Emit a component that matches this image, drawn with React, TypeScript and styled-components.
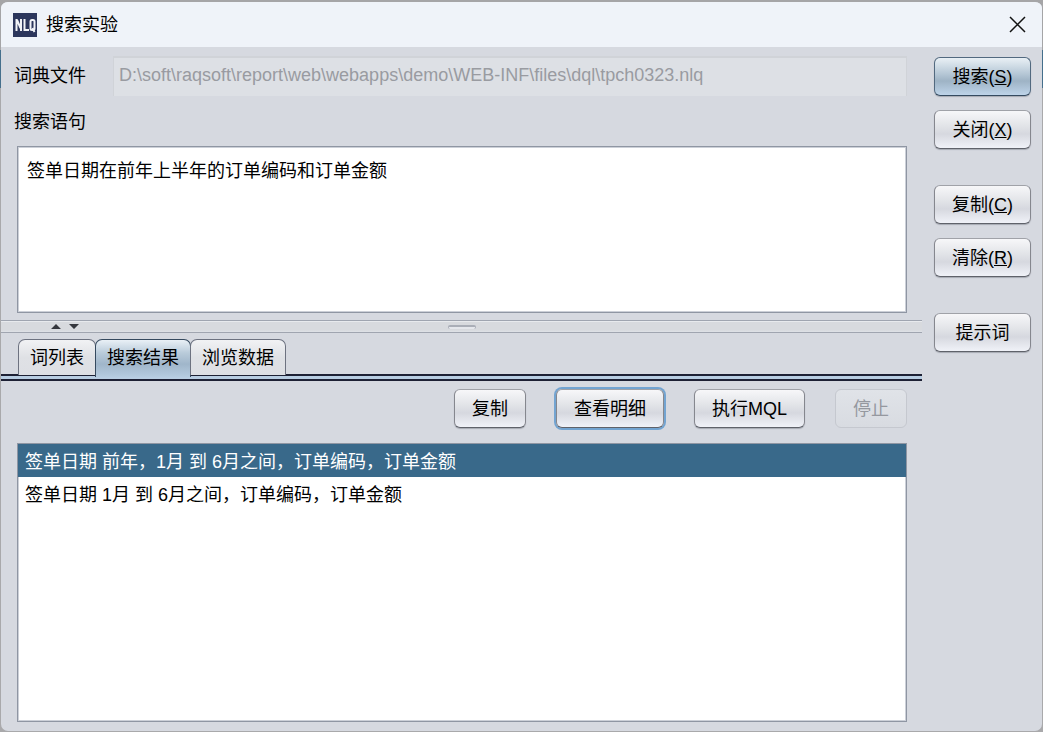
import React, { useState } from "react";
import styled, { createGlobalStyle, css } from "styled-components";

const GlobalStyle = createGlobalStyle`
  * { box-sizing: border-box; }
  body {
    margin: 0;
    background: linear-gradient(#a5a5a7 50px, #456f8c 50px 88px, #a9a9ab 88px);
    font: 18px/24px "Liberation Sans", "Noto Sans CJK SC", sans-serif;
    color: #000;
  }
  button, input, textarea { font: inherit; color: inherit; }
`;

const Window = styled.div`
  display: flex;
  flex-direction: column;
  min-height: 100vh;
  border: solid transparent;
  border-width: 2px 1px 1px;
  border-radius: 8px;
  background: #d6d9e0 padding-box;
  overflow: hidden;
`;

const TitleBar = styled.header`
  display: flex;
  align-items: center;
  gap: 9px;
  height: 45px;
  padding: 0 16px 0 12px;
  background: #eff3f9;
`;

const Title = styled.h1`
  flex: 1;
  margin: 0;
  font-size: 18px;
  font-weight: 400;
`;

const CloseButton = styled.button`
  display: flex;
  padding: 0;
  border: 0;
  background: none;
`;

const Body = styled.div`
  flex: 1;
  display: flex;
  gap: 12px;
  padding-right: 11px;
`;

const Main = styled.main`
  flex: 1;
  min-width: 0;
  display: flex;
  flex-direction: column;
  padding: 9px 0;
`;

const FileRow = styled.div`
  display: grid;
  grid-template-columns: 99px 1fr;
  align-items: center;
  padding: 0 15px 0 13px;
`;

const PathInput = styled.input`
  width: 100%;
  height: 40px;
  padding: 0 5px 3px;
  border: solid #d0d3d8;
  border-width: 2px 1px 0;
  border-radius: 0;
  background: #dde0e5;
  &:disabled { color: #999ba1; }
`;

const QueryLabel = styled.label`
  margin: 14px 15px 12px 13px;
`;

const Query = styled.textarea`
  display: block;
  height: 167px;
  margin: 0 15px 0 16px;
  padding: 12px 9px;
  border: 1px solid #8f96a3;
  box-shadow: inset 0 0 0 1px #ccd0d8;
  background: #fff;
  resize: none;
  outline: 0;
`;

const Divider = styled.div`
  display: grid;
  grid-template-columns: 1fr 28px 1fr;
  align-items: center;
  height: 13px;
  margin-top: 7px;
  border: solid #a0a5b0;
  border-width: 1px 0;
  background: linear-gradient(#e8eaed 1px, #d8dade 1px 9px, #dfe2e7);
`;

const Arrows = styled.svg`
  display: block;
  width: 30px;
  height: 10px;
  margin-left: 50px;
`;

const Grip = styled.span`
  height: 4px;
  border: solid #aaaeb7;
  border-width: 2px 1px 0;
  border-radius: 2px;
  background: #e5e7ec;
`;

const Tabs = styled.div`
  display: flex;
  height: 42px;
  margin-top: 6px;
  padding-left: 17px;
  background: linear-gradient(#d6d9e0 35px, #1d2034 35px 37px, #b8cde2 37px 40px, #1d2034 40px);
`;

const Tab = styled.button<{ $active: boolean }>`
  height: ${(p) => (p.$active ? 38 : 36)}px;
  padding: ${(p) => (p.$active ? "0 11px 2px" : "0 11px")};
  border: 1px solid #6d7280;
  border-bottom: 0;
  border-radius: 7px 7px 0 0;
  background: linear-gradient(#f1f2f4, #dfe1e5 50%, #dddfe4);
  & + & { margin-left: -1px; }
  ${(p) =>
    p.$active &&
    css`
      border-color: #35495e;
      background: linear-gradient(#e9f0f6, #b9cbda 35%, #a0b6ca 65%, #b5cbe0);
    `}
`;

const Button = styled.button<{ $look?: "primary" | "focused" }>`
  height: 39px;
  padding: 0 17px;
  border: 1px solid #85878e;
  border-top-color: #a0a2a8;
  border-bottom-color: #5f626a;
  border-radius: 6px;
  background: linear-gradient(#f7f7f9, #e2e4e8 40%, #d6d8df 62%, #f0f2f8);
  box-shadow: 0 1px 1px #a6a9b2;
  white-space: nowrap;
  &:disabled {
    color: #95989f;
    border-color: #c5c8cf;
    background: linear-gradient(#e0e3e8, #d8dbe1);
    box-shadow: none;
  }
  ${(p) =>
    p.$look === "primary" &&
    css`
      border-color: #52697f;
      border-bottom-color: #354b60;
      background: linear-gradient(#e9f0f5, #b9cad8 40%, #9eb3c5 62%, #bed4e9);
    `}
  ${(p) =>
    p.$look === "focused" &&
    css`
      box-shadow: 0 0 0 2px #73a4d1;
    `}
`;

const Actions = styled.div`
  display: flex;
  justify-content: flex-end;
  gap: 30px;
  padding: 8px 15px 15px;
`;

const Results = styled.ul`
  flex: 1;
  margin: 0 15px 0 16px;
  padding: 0;
  border: 1px solid #8f96a3;
  box-shadow: inset 0 0 0 1px #ccd0d8;
  background: #fff;
  list-style: none;
`;

const Result = styled.li<{ $selected: boolean }>`
  height: 33px;
  padding: 6px 7px 3px;
  color: ${(p) => (p.$selected ? "#fff" : "#000")};
  background: ${(p) => (p.$selected ? "#39698a" : "transparent")};
`;

const Side = styled.aside`
  display: flex;
  flex-direction: column;
  gap: 36px;
  width: 97px;
  padding-top: 10px;
`;

const ButtonGroup = styled.div`
  display: grid;
  gap: 14px;
  ${Button} { padding: 0; }
`;

const tabs = ["词列表", "搜索结果", "浏览数据"];
const results = [
  "签单日期 前年，1月 到 6月之间，订单编码，订单金额",
  "签单日期 1月 到 6月之间，订单编码，订单金额",
];

function Logo() {
  return (
    <svg width="24" height="24" viewBox="0 0 24 24" aria-label="NLQ">
      <rect width="24" height="24" fill="#2c365c" />
      <g fill="none" stroke="#f2f3f7" strokeWidth="2">
        <path d="M3.500 18V6M4 7l3.500 8M8 18V6M11.500 6v11h4.500" />
        <rect x="17.500" y="7" width="4" height="10" rx="1.500" />
        <path d="M19.500 15l2 4" />
      </g>
    </svg>
  );
}

export default function App() {
  const [tab, setTab] = useState(1);
  const [selected, setSelected] = useState(0);
  return (
    <>
      <GlobalStyle />
      <Window>
        <TitleBar>
          <Logo />
          <Title>搜索实验</Title>
          <CloseButton aria-label="关闭窗口">
            <svg width="17" height="17" viewBox="0 0 17 17" fill="none" stroke="#111" strokeWidth="1.500">
              <path d="M1 1l15 15M16 1L1 16" />
            </svg>
          </CloseButton>
        </TitleBar>
        <Body>
          <Main>
            <FileRow>
              <label htmlFor="dict">词典文件</label>
              <PathInput
                id="dict"
                disabled
                defaultValue={"D:\\soft\\raqsoft\\report\\web\\webapps\\demo\\WEB-INF\\files\\dql\\tpch0323.nlq"}
              />
            </FileRow>
            <QueryLabel htmlFor="query">搜索语句</QueryLabel>
            <Query id="query" spellCheck={false} defaultValue="签单日期在前年上半年的订单编码和订单金额" />
            <Divider role="separator">
              <Arrows viewBox="0 0 30 10" fill="#35373d">
                <path d="M0 7L5 2l5 5zM18 2h10l-5 5z" />
              </Arrows>
              <Grip />
            </Divider>
            <Tabs role="tablist">
              {tabs.map((name, i) => (
                <Tab key={name} role="tab" aria-selected={tab === i} $active={tab === i} onClick={() => setTab(i)}>
                  {name}
                </Tab>
              ))}
            </Tabs>
            <Actions>
              <Button>复制</Button>
              <Button $look="focused">查看明细</Button>
              <Button>执行MQL</Button>
              <Button disabled>停止</Button>
            </Actions>
            <Results>
              {results.map((text, i) => (
                <Result key={text} $selected={selected === i} onClick={() => setSelected(i)}>
                  {text}
                </Result>
              ))}
            </Results>
          </Main>
          <Side>
            <ButtonGroup>
              <Button $look="primary">搜索(<u>S</u>)</Button>
              <Button>关闭(<u>X</u>)</Button>
            </ButtonGroup>
            <ButtonGroup>
              <Button>复制(<u>C</u>)</Button>
              <Button>清除(<u>R</u>)</Button>
            </ButtonGroup>
            <ButtonGroup>
              <Button>提示词</Button>
            </ButtonGroup>
          </Side>
        </Body>
      </Window>
    </>
  );
}
